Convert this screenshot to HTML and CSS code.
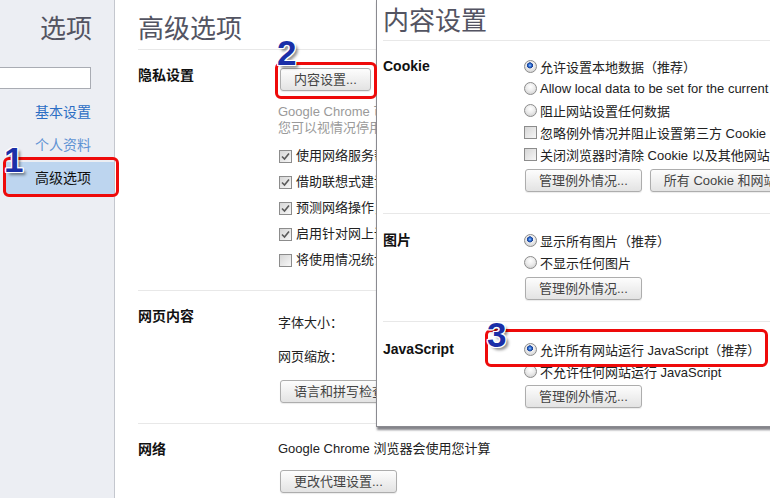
FILE: index.html
```html
<!DOCTYPE html>
<html>
  <head>
    <meta charset="utf-8">
    <title>选项 - 高级选项</title>
    <link rel="stylesheet" href="styles.css">
  </head>
  <body>
    <div class="page">
      <nav class="sidebar">
        <h1 class="side-title">选项</h1>
        <input type="text" class="search">
        <ul class="nav">
          <li>基本设置</li>
          <li class="faded">个人资料</li>
          <li class="selected">高级选项</li>
        </ul>
      </nav>

      <main class="content">
        <h1 class="page-title">高级选项</h1>

        <section class="section">
          <div class="section-label">隐私设置</div>
          <div class="section-body">
            <button class="btn btn-top">内容设置...</button>
            <p class="note">Google Chrome 可能会使用网络服务改善您的浏览体验。<br>您可以视情况停用这些服务。</p>
            <div class="check-row"><span class="box"><svg width="11" height="11" viewBox="0 0 11 11"><path d="M2 5.5 L4.5 8 L9 2.5" fill="none" stroke="#5a5a5a" stroke-width="1.6"/></svg></span>使用网络服务帮助解决导航错误</div>
            <div class="check-row"><span class="box"><svg width="11" height="11" viewBox="0 0 11 11"><path d="M2 5.5 L4.5 8 L9 2.5" fill="none" stroke="#5a5a5a" stroke-width="1.6"/></svg></span>借助联想式建议服务完成在地址栏中输入的搜索和网址</div>
            <div class="check-row"><span class="box"><svg width="11" height="11" viewBox="0 0 11 11"><path d="M2 5.5 L4.5 8 L9 2.5" fill="none" stroke="#5a5a5a" stroke-width="1.6"/></svg></span>预测网络操作，以提高网页载入速度</div>
            <div class="check-row"><span class="box"><svg width="11" height="11" viewBox="0 0 11 11"><path d="M2 5.5 L4.5 8 L9 2.5" fill="none" stroke="#5a5a5a" stroke-width="1.6"/></svg></span>启用针对网上诱骗和恶意软件的防护功能</div>
            <div class="check-row"><span class="box"></span>将使用情况统计信息和崩溃报告自动发送给 Google</div>
          </div>
        </section>

        <section class="section web">
          <div class="section-label">网页内容</div>
          <div class="section-body">
            <div class="field-row">字体大小：</div>
            <div class="field-row">网页缩放：</div>
            <button class="btn">语言和拼写检查设置...</button>
          </div>
        </section>

        <section class="section last">
          <div class="section-label">网络</div>
          <div class="section-body">
            <div class="text-row">Google Chrome 浏览器会使用您计算</div>
            <button class="btn btn-gap">更改代理设置...</button>
          </div>
        </section>
      </main>
    </div>

    <div class="dialog">
      <h2 class="dlg-title">内容设置</h2>

      <section class="dlg-section">
        <div class="dlg-label">Cookie</div>
        <div class="dlg-body">
          <div class="opt"><span class="radio on"></span>允许设置本地数据（推荐）</div>
          <div class="opt"><span class="radio"></span>Allow local data to be set for the current session only</div>
          <div class="opt"><span class="radio"></span>阻止网站设置任何数据</div>
          <div class="opt"><span class="box"></span>忽略例外情况并阻止设置第三方 Cookie</div>
          <div class="opt"><span class="box"></span>关闭浏览器时清除 Cookie 以及其他网站数据</div>
          <div class="btn-row">
            <button class="btn">管理例外情况...</button>
            <button class="btn">所有 Cookie 和网站数据...</button>
          </div>
        </div>
      </section>

      <section class="dlg-section">
        <div class="dlg-label">图片</div>
        <div class="dlg-body">
          <div class="opt"><span class="radio on"></span>显示所有图片（推荐）</div>
          <div class="opt"><span class="radio"></span>不显示任何图片</div>
          <div class="btn-row">
            <button class="btn">管理例外情况...</button>
          </div>
        </div>
      </section>

      <section class="dlg-section js">
        <div class="dlg-label">JavaScript</div>
        <div class="dlg-body">
          <div class="opt"><span class="radio on"></span>允许所有网站运行 JavaScript（推荐）</div>
          <div class="opt"><span class="radio"></span>不允许任何网站运行 JavaScript</div>
          <div class="btn-row tight">
            <button class="btn">管理例外情况...</button>
          </div>
        </div>
      </section>
    </div>

    <!-- annotations -->
    <div class="mark mark-1"></div>
    <div class="mark mark-2"></div>
    <div class="mark mark-3"></div>
    <span class="num num-1">1</span>
    <span class="num num-2">2</span>
    <span class="num num-3">3</span>
  </body>
</html>
```

FILE: styles.css
```css
body {
  margin: 0;
  width: 770px;
  height: 498px;
  overflow: hidden;
  position: relative;
  font-family: "Liberation Sans", "Noto Sans CJK SC", sans-serif;
  font-size: 13px;
  color: #222;
  background: #fff;
}

.page {
  display: flex;
  height: 498px;
}

/* sidebar */
.sidebar {
  width: 114px;
  flex: none;
  background: #eceef3;
  border-right: 1px solid #c4c7ce;
}

.side-title {
  margin: 14px 0 0;
  padding-right: 22px;
  font-size: 26px;
  line-height: 30px;
  font-weight: normal;
  color: #535462;
  text-align: right;
}

.search {
  display: block;
  width: 91px;
  height: 22px;
  margin: 23px 0 0;
  padding: 0;
  box-sizing: border-box;
  border: 1px solid #a9acb3;
  border-left: none;
  background: #fff;
}

.nav {
  list-style: none;
  margin: 7px 0 0;
  padding: 0;
}

.nav li {
  height: 33px;
  line-height: 33px;
  margin-left: 4px;
  padding-right: 23px;
  text-align: right;
  font-size: 14px;
  color: #2d6ec4;
}

.nav li.faded {
  color: #5f93d3;
}

.nav li.selected {
  background: #bdd5ef;
  color: #111;
}

/* main content */
.content {
  flex: 1;
  padding-left: 23px;
  white-space: nowrap;
}

.page-title {
  margin: 14px 0 0;
  padding-bottom: 5px;
  font-size: 26px;
  line-height: 30px;
  font-weight: normal;
  color: #535462;
  border-bottom: 1px solid #e8e8e8;
}

.section {
  display: flex;
  padding: 15px 0 17px;
  border-bottom: 1px solid #e8e8e8;
}

.section.web {
  padding-bottom: 20px;
}

.section.last {
  border-bottom: none;
}

.section-label {
  width: 140px;
  flex: none;
  font-size: 14px;
  font-weight: bold;
  line-height: 20px;
  color: #111;
}

.section-body {
  line-height: 20px;
}

.section-body > .btn {
  margin-left: 2px;
}

.btn-top {
  margin-top: 3px;
}

.note {
  margin: 13px 0 0;
  line-height: 16px;
  color: #9a9a9a;
}

.check-row {
  display: flex;
  align-items: center;
  gap: 4px;
  height: 26px;
  padding-left: 1px;
}

.check-row:first-of-type {
  margin-top: 7px;
}

.field-row {
  height: 34px;
  line-height: 34px;
}

.field-row + .btn {
  margin-top: 6px;
}

.text-row {
  line-height: 20px;
}

.btn-gap {
  margin-top: 11px;
}

/* controls */
.btn {
  display: inline-block;
  height: 23px;
  box-sizing: border-box;
  padding: 0 13px;
  border: 1px solid #adadad;
  border-radius: 3px;
  background: linear-gradient(#fdfdfd, #e3e3e3);
  box-shadow: 0 1px 1px rgba(0, 0, 0, 0.08);
  font: inherit;
  line-height: 20px;
  color: #444;
  vertical-align: top;
}

.box {
  display: inline-block;
  flex: none;
  width: 13px;
  height: 13px;
  box-sizing: border-box;
  border: 1px solid #8c8c8c;
  background: linear-gradient(135deg, #d6d6d6, #f7f7f7);
}

.box svg {
  display: block;
}

.radio {
  display: inline-block;
  flex: none;
  width: 13px;
  height: 13px;
  box-sizing: border-box;
  border: 1px solid #8c8c8c;
  border-radius: 50%;
  background: radial-gradient(circle at 50% 35%, #ffffff 0, #ececec 45%, #c8c8c8 100%);
}

.radio.on {
  background:
    radial-gradient(circle at 45% 40%, #9cc8ff 0, #2f6fd3 1.5px, #1b3f91 2.8px, rgba(0, 0, 0, 0) 3.3px),
    radial-gradient(circle at 50% 35%, #ffffff 0, #ececec 45%, #c8c8c8 100%);
}

/* dialog */
.dialog {
  position: absolute;
  left: 376px;
  top: -1px;
  width: 420px;
  height: 428px;
  box-sizing: border-box;
  padding-left: 6px;
  background: #fff;
  border: 1px solid #8a8a90;
  box-shadow: 1px 3px 2px rgba(50, 50, 60, 0.6);
  white-space: nowrap;
}

.dlg-title {
  margin: 6px 0 0;
  padding-bottom: 4px;
  font-size: 26px;
  line-height: 30px;
  font-weight: normal;
  color: #535462;
  border-bottom: 1px solid #e8e8e8;
}

.dlg-section {
  display: flex;
  padding: 14px 0 21px;
  border-bottom: 1px solid #e8e8e8;
}

.dlg-section + .dlg-section {
  padding-top: 15px;
}

.dlg-section.js {
  padding-top: 16px;
  border-bottom: none;
}

.dlg-label {
  width: 141px;
  flex: none;
  font-size: 14px;
  font-weight: bold;
  line-height: 22px;
  color: #111;
}

.opt {
  display: flex;
  align-items: center;
  gap: 3px;
  height: 22px;
}

.btn-row {
  display: flex;
  gap: 8px;
  margin-top: 4px;
  padding-left: 1px;
}

.btn-row.tight {
  margin-top: 3px;
}

/* annotations */
.mark {
  position: absolute;
  box-sizing: border-box;
  border: 3px solid #ee0a0a;
  border-radius: 6px;
}

.mark-1 {
  left: 3px;
  top: 157px;
  width: 116px;
  height: 40px;
}

.mark-2 {
  left: 275px;
  top: 62px;
  width: 102px;
  height: 37px;
}

.mark-3 {
  left: 485px;
  top: 329px;
  width: 283px;
  height: 38px;
}

.num {
  position: absolute;
  font-family: "Liberation Sans", sans-serif;
  font-size: 35px;
  font-weight: bold;
  line-height: 1;
  color: #1a2fa8;
  text-shadow:
    1px 0 0 #fff, -1px 0 0 #fff, 0 1px 0 #fff, 0 -1px 0 #fff,
    1px 1px 0 #fff, -1px -1px 0 #fff, 1px -1px 0 #fff, -1px 1px 0 #fff,
    3px 3px 3px rgba(0, 0, 0, 0.45);
}

.num-1 {
  left: 4px;
  top: 142px;
}

.num-2 {
  left: 277px;
  top: 35px;
}

.num-3 {
  left: 487px;
  top: 317px;
}
```
